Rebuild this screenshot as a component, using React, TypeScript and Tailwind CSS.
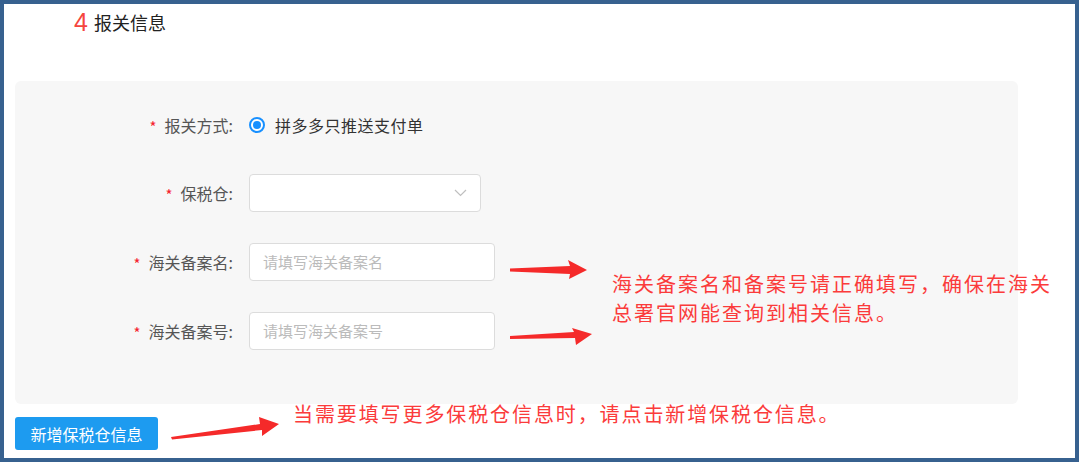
import React from 'react';

const FONT = { fontFamily: '"Noto Sans CJK SC", "Liberation Sans", sans-serif' };

const Label: React.FC<{ text: string }> = ({ text }) => (
  <div className="w-[218px] flex items-center justify-end text-[16px] text-[#555]">
    <span className="text-[#f5222d] text-[15px] leading-[16px] mr-[8px] mt-[3px]">*</span>
    <span>{text}:</span>
  </div>
);

const Arrows: React.FC = () => (
  <svg className="absolute inset-0 pointer-events-none" width="1079" height="462" viewBox="0 0 1079 462">
    <polygon fill="#f52a2a" points="506,264.5 566,262 564,256 583,266 565,275 566,270 506,267.5" />
    <polygon fill="#f52a2a" points="506,332 570,328 568,324 588,330 572,341 571,334 506,335" />
    <polygon fill="#f52a2a" points="167,433 256,420 255,413 275,420 258,432 258,426 168,435.5" />
  </svg>
);

const App: React.FC = () => {
  return (
    <div className="relative w-[1079px] h-[462px] bg-white border-4 border-[#37618f] overflow-hidden" style={FONT}>
      <div className="pl-[11px]">
        {/* Section title */}
        <div className="h-[77px] flex items-start pt-[3px] pl-[59px]">
          <span className="text-[25px] leading-[30px] text-[#f5453d]" style={{ fontFamily: '"Liberation Sans", sans-serif' }}>4</span>
          <span className="ml-[6px] text-[18px] leading-[30px] text-[#222]">报关信息</span>
        </div>

        {/* Form panel */}
        <div className="w-[1003px] h-[323px] bg-[#f7f7f7] rounded-[6px] pt-[25px]">
          <div className="flex h-[38px] items-center">
            <Label text="报关方式" />
            <div className="ml-[16px] flex items-center">
              <span className="w-[16px] h-[16px] rounded-full border-2 border-[#1890ff] bg-white flex items-center justify-center">
                <span className="w-[8px] h-[8px] rounded-full bg-[#1890ff]" />
              </span>
              <span className="ml-[10px] text-[16px] tracking-[0.5px] text-[#333]">拼多多只推送支付单</span>
            </div>
          </div>

          <div className="flex h-[38px] items-center mt-[30px]">
            <Label text="保税仓" />
            <div className="ml-[16px] w-[232px] h-[38px] bg-white border border-[#dcdcdc] rounded-[4px] flex items-center justify-end pr-[13px]">
              <svg width="13" height="8" viewBox="0 0 13 8">
                <polyline points="1,1 6.5,6.5 12,1" fill="none" stroke="#bfbfbf" strokeWidth="1.2" />
              </svg>
            </div>
          </div>

          <div className="flex h-[38px] items-center mt-[31px]">
            <Label text="海关备案名" />
            <div className="ml-[16px] w-[246px] h-[38px] bg-white border border-[#dcdcdc] rounded-[4px] flex items-center pl-[13px] text-[15px] text-[#bbb]">
              请填写海关备案名
            </div>
          </div>

          <div className="flex h-[38px] items-center mt-[31px]">
            <Label text="海关备案号" />
            <div className="ml-[16px] w-[246px] h-[38px] bg-white border border-[#dcdcdc] rounded-[4px] flex items-center pl-[13px] text-[15px] text-[#bbb]">
              请填写海关备案号
            </div>
          </div>
        </div>

        <button className="mt-[13px] w-[143px] h-[33px] bg-[#1d9bf0] rounded-[3px] text-white text-[16px] flex items-center justify-center">
          新增保税仓信息
        </button>
      </div>

      {/* Annotations */}
      <Arrows />
      <div className="absolute left-[608px] top-[264.5px] text-[20px] leading-[29px] tracking-[2px] text-[#fb3b3b] whitespace-nowrap">
        海关备案名和备案号请正确填写，确保在海关
        <br />
        总署官网能查询到相关信息。
      </div>
      <div className="absolute left-[289px] top-[394.5px] text-[20px] leading-[29px] tracking-[1.9px] text-[#fb3b3b] whitespace-nowrap">
        当需要填写更多保税仓信息时，请点击新增保税仓信息。
      </div>
    </div>
  );
};

export default App;
